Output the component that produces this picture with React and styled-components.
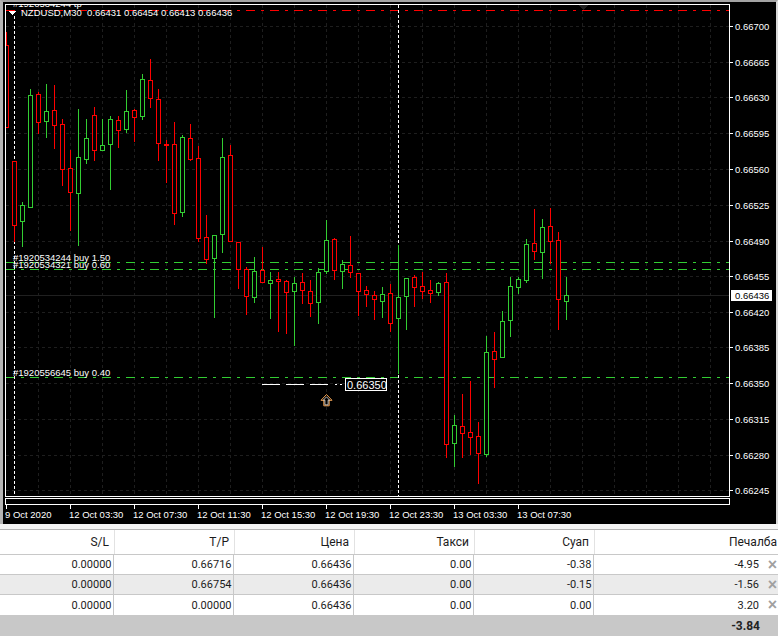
import React from "react";
import styled, { createGlobalStyle } from "styled-components";

const Global = createGlobalStyle`
  html, body { margin: 0; padding: 0; background: #fff; overflow: hidden; }
  #root { width: 778px; height: 636px; }
`;

const Page = styled.div`
  width: 778px;
  height: 636px;
  display: flex;
  flex-direction: column;
  overflow: hidden;
  background: #fff;
`;

const ChartPanel = styled.div`
  height: 524px;
  flex: none;
  box-sizing: border-box;
  background: #000;
  border-top: 2px solid #a3a3a3;
  border-left: 3px solid #b4b4b4;
  border-right: 2px solid #d8d8d8;
`;

const ChartSvg = styled.svg`
  display: block;
  width: 773px;
  height: 522px;
`;

const ChartText = styled.text`
  font-family: "Liberation Sans", Arial, sans-serif;
  font-size: ${(p) => p.$size || 9.5}px;
  fill: ${(p) => p.$fill || "#fff"};
`;

const Spacer = styled.div`
  height: 5px;
  flex: none;
  background: #f4f4f4;
  border-bottom: 1px solid #b4b4b4;
`;

const Row = styled.div`
  display: grid;
  grid-template-columns: 115px 120px 120px 120px 120px 1fr;
  box-sizing: border-box;
  height: ${(p) => p.$h}px;
  flex: none;
  background: ${(p) => p.$bg || "#fff"};
  border-bottom: ${(p) => (p.$flat ? "none" : "1px solid #c8c8c8")};
  font-family: Roboto, "Liberation Sans", Arial, sans-serif;
  font-size: 11px;
  color: #1c1c1c;
`;

const HeadCell = styled.div`
  display: flex;
  align-items: center;
  justify-content: flex-end;
  padding-right: ${(p) => (p.$last ? "1px" : "5px")};
  border-right: ${(p) => (p.$last ? "none" : "1px solid #e2e2e2")};
  font-size: 12px;
`;

const Cell = styled.div`
  display: flex;
  align-items: center;
  justify-content: flex-end;
  position: relative;
  left: -1px;
  padding-right: ${(p) => (p.$last ? "18px" : "1.500px")};
  border-right: ${(p) => (p.$last ? "none" : "1px solid #c8c8c8")};
`;

const TotalCell = styled.div`
  grid-column: 6;
  display: flex;
  align-items: center;
  justify-content: flex-end;
  padding-right: 18px;
  font-weight: 700;
  font-size: 12px;
  color: #222;
`;

const Close = styled.span`
  position: absolute;
  right: 0;
  top: 50%;
  transform: translateY(-50%);
  font-family: "Liberation Sans", Arial, sans-serif;
  font-size: 16px;
  font-weight: 700;
  line-height: 1;
  color: #a0a0a0;
`;

const G = "#32cd32";
const R = "#ff0000";

// [color, high, bodyTop, bodyBottom, low]
const candles = [
  [R,32,45,127,127],[R,161,161,225,241],[G,202,205,221,246],[G,89,95,207,207],[R,92,94,122,133],
  [G,84,111,121,137],[R,85,110,125,148],[R,119,124,169,185],[R,150,168,192,230],[G,109,157,193,245],
  [G,119,138,159,163],[R,107,115,150,160],[G,119,145,150,150],[G,116,119,144,189],[R,116,120,130,147],
  [G,90,111,129,132],[R,109,110,117,141],[G,74,79,116,119],[R,59,80,98,107],[R,89,99,143,160],
  [R,140,144,145,182],[R,122,144,213,224],[G,135,137,212,216],[R,124,138,159,160],[R,146,158,238,241],
  [R,215,237,259,263],[G,235,235,258,317],[G,138,157,234,252],[R,145,155,241,241],[R,242,242,269,288],
  [R,267,269,296,314],[G,257,271,297,302],[R,247,270,282,282],[G,272,280,283,318],[R,272,279,281,331],
  [R,280,281,292,333],[G,277,283,291,345],[R,273,282,290,303],[R,280,291,303,316],[G,268,272,302,323],
  [G,220,240,271,273],[R,238,239,270,279],[G,260,264,271,288],[R,236,265,272,277],[R,273,273,291,315],
  [R,286,290,294,306],[R,291,295,299,319],[G,287,294,301,317],[R,284,293,323,331],[G,245,297,318,373],
  [G,278,278,296,329],[R,275,277,287,306],[R,272,286,291,298],[R,280,290,293,302],[G,282,283,292,295],
  [R,273,282,444,457],[G,415,425,443,466],[R,394,426,433,457],[R,381,432,437,454],[R,422,436,453,483],
  [G,336,352,454,456],[R,332,351,359,387],[G,311,321,357,357],[G,277,286,320,336],[G,277,279,287,293],
  [G,239,244,280,282],[R,209,243,251,259],[G,219,227,252,278],[R,208,226,241,263],[R,232,240,299,329],
  [G,277,295,301,319],
];

const gridY = [26, 62, 97, 133, 169, 205, 241, 276, 312, 347, 383, 419, 455, 490];
const prices = ["0.66700","0.66665","0.66630","0.66595","0.66560","0.66525","0.66490","0.66455","0.66420","0.66385","0.66350","0.66315","0.66280","0.66245"];
const gridX = Array.from({ length: 22 }, (_, i) => 38 + i * 32);
const times = [
  [5, "9 Oct 2020"],[69, "12 Oct 03:30"],[133, "12 Oct 07:30"],[197, "12 Oct 11:30"],[261, "12 Oct 15:30"],
  [325, "12 Oct 19:30"],[389, "12 Oct 23:30"],[453, "13 Oct 03:30"],[517, "13 Oct 07:30"],
];
const timeTicks = [6, 70, 134, 198, 262, 326, 390, 454, 518];

const Chart = () => (
  <ChartSvg viewBox="3 2 773 522" shapeRendering="crispEdges">
    <defs>
      <clipPath id="plot"><rect x="6" y="5" width="723" height="491" /></clipPath>
    </defs>
    <g clipPath="url(#plot)">
      {gridY.map((y) => (
        <line key={y} x1="6" x2="729" y1={y + 0.5} y2={y + 0.5} stroke="#1e1e1e" strokeDasharray="3 3" />
      ))}
      {gridX.map((x) => (
        <line key={x} x1={x + 0.5} x2={x + 0.5} y1="5" y2="496" stroke="#1e1e1e" strokeDasharray="3 3" />
      ))}
      <line x1="6" x2="729" y1="295.5" y2="295.5" stroke="#202020" />
      <line x1="6" x2="729" y1="10.5" y2="10.5" stroke={R} strokeDasharray="9 6 3 6" />
      {[262, 269, 377].map((y) => (
        <line key={y} x1="6" x2="729" y1={y + 0.5} y2={y + 0.5} stroke={G} strokeDasharray="9 6 3 6" />
      ))}
      <line x1="14.5" x2="14.5" y1="16" y2="505" stroke="#fff" strokeDasharray="3 2" />
      <line x1="398.5" x2="398.5" y1="5" y2="505" stroke="#fff" strokeDasharray="3 2" />
      {candles.map(([c, h, t, b, l], i) => {
        const x = 6 + i * 8;
        return (
          <g key={i}>
            <line x1={x + 0.5} x2={x + 0.5} y1={h} y2={l + 1} stroke={c} />
            <rect x={x - 1.5} y={t + 0.5} width="4" height={Math.max(b - t, 1)} fill="#000" stroke={c} />
          </g>
        );
      })}
      <path d="M578 5h11l-5.500 5z" fill="#222" />
      <ChartText x="13" y="7">#1920534244 tp</ChartText>
      <ChartText x="13" y="260.500">#1920534244 buy 1.50</ChartText>
      <ChartText x="13" y="267.500">#1920534321 buy 0.60</ChartText>
      <ChartText x="13" y="375.500">#1920556645 buy 0.40</ChartText>
      <path d="M9 11h7l-3.500 4z" fill="#fff" />
      <ChartText x="21" y="15.500">NZDUSD,M30</ChartText>
      <ChartText x="87" y="15.500">0.66431 0.66454 0.66413 0.66436</ChartText>
      <line x1="262" x2="328" y1="384.500" y2="384.500" stroke="#fff" strokeDasharray="18 6" />
      <line x1="335" x2="344" y1="384.500" y2="384.500" stroke="#fff" strokeDasharray="2 3" />
      <rect x="345.500" y="378.500" width="41" height="12" fill="#000" stroke="#fff" />
      <ChartText x="347" y="388.500" $size={11}>0.66350</ChartText>
      <g shapeRendering="auto">
        <path d="M326.500 394.500l5.500 5.800h-2.800v5.500h-5.400v-5.500h-2.800z" fill="#000" stroke="#f0a050" strokeWidth="1" />
        <path d="M326.500 396.800l3.100 3.400h-1.500v4.600h-3.200v-4.600h-1.500z" fill="none" stroke="#fff" strokeWidth="0.7" />
      </g>
    </g>
    <rect x="5.500" y="4.500" width="724" height="492" fill="none" stroke="#fff" />
    <rect x="5.500" y="498.500" width="724" height="6" fill="none" stroke="#fff" />
    {gridY.map((y, i) => (
      <g key={y}>
        <line x1="730" x2="733" y1={y + 0.5} y2={y + 0.5} stroke="#fff" />
        <ChartText x="735" y={y + 4}>{prices[i]}</ChartText>
      </g>
    ))}
    <rect x="731" y="290" width="41" height="11" fill="#fff" />
    <ChartText x="735" y="299" $fill="#000">0.66436</ChartText>
    {timeTicks.map((x) => (
      <line key={x} x1={x + 0.5} x2={x + 0.5} y1="505" y2="509" stroke="#fff" />
    ))}
    {times.map(([x, t]) => (
      <ChartText key={x} x={x} y="518">{t}</ChartText>
    ))}
  </ChartSvg>
);

const heads = ["S/L", "T/P", "Цена", "Такси", "Суап", "Печалба"];
const rows = [
  { bg: "#fff", v: ["0.00000", "0.66716", "0.66436", "0.00", "-0.38", "-4.95"] },
  { bg: "#ebebeb", v: ["0.00000", "0.66754", "0.66436", "0.00", "-0.15", "-1.56"] },
  { bg: "#fff", v: ["0.00000", "0.00000", "0.66436", "0.00", "0.00", "3.20"] },
];

export default function App() {
  return (
    <Page>
      <Global />
      <ChartPanel><Chart /></ChartPanel>
      <Spacer />
      <Row $h={25}>
        {heads.map((h, i) => (
          <HeadCell key={h} $last={i === 5}>{h}</HeadCell>
        ))}
      </Row>
      {rows.map((r, ri) => (
        <Row key={ri} $h={20} $bg={r.bg} $flat={ri === 2}>
          {r.v.map((v, i) => (
            <Cell key={i} $last={i === 5}>
              {v}
              {i === 5 && <Close>×</Close>}
            </Cell>
          ))}
        </Row>
      ))}
      <Row $h={22} $bg="#c8c8c8" $flat>
        <TotalCell>-3.84</TotalCell>
      </Row>
    </Page>
  );
}
